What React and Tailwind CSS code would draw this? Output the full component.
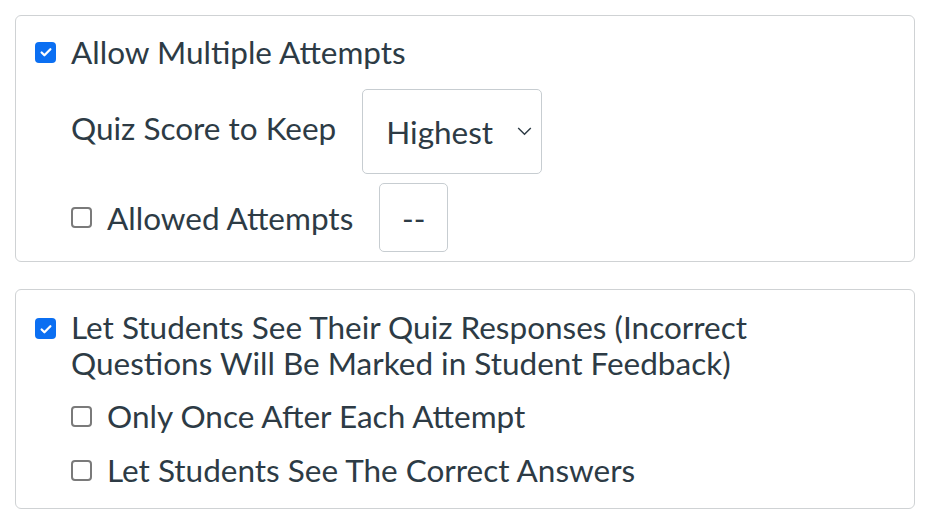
const Check = ({ checked }) =>
  checked ? (
    <span className="flex h-[21px] w-[21px] shrink-0 items-center justify-center rounded-[4px] bg-[#0b6ff2]">
      <svg viewBox="0 0 16 16" className="h-[14px] w-[14px]">
        <path d="M3 8.5l3.2 3.2L13 4.8" fill="none" stroke="white" strokeWidth="2.6" strokeLinecap="round" strokeLinejoin="round" />
      </svg>
    </span>
  ) : (
    <span className="block h-[21px] w-[21px] shrink-0 rounded-[4px] border-2 border-[#7a7a7a] bg-white" />
  );

export default function App() {
  return (
    <div className="min-h-[520px] w-[926px] bg-white pl-[15px] pr-[11px] pt-[15px] font-['Lato','Noto_Sans',sans-serif] text-[31.5px] leading-[36px] text-[#2d3b45]">
      <div className="h-[247px] rounded-[6px] border border-[#cfd2d4] pl-[19px] pt-[18px]">
        <label className="flex items-center gap-[15px]">
          <Check checked />
          <span>Allow Multiple Attempts</span>
        </label>
        <div className="mt-[19px] flex items-center pl-[36px]">
          <span className="-mt-[7px]">Quiz Score to Keep</span>
          <div className="ml-[26px] flex h-[85px] w-[180px] items-center justify-between rounded-[5px] border border-[#c7cdd1] pl-[23px] pr-[9px]">
            <span>Highest</span>
            <svg viewBox="0 0 16 10" className="h-[9px] w-[15px]">
              <path d="M1 1l7 7 7-7" fill="none" stroke="#2d3b45" strokeWidth="1.6" />
            </svg>
          </div>
        </div>
        <div className="mt-[9px] flex items-center pl-[36px]">
          <Check />
          <span className="ml-[15px]">Allowed Attempts</span>
          <div className="ml-[26px] flex h-[69px] w-[69px] items-center justify-center rounded-[5px] border border-[#c7cdd1]">
            --
          </div>
        </div>
      </div>
      <div className="mt-[27px] h-[220px] rounded-[6px] border border-[#cfd2d4] pl-[19px] pt-[27px]">
        <label className="flex items-start gap-[15px]">
          <span className="pt-[1px]">
            <Check checked />
          </span>
          <span className="-mt-[8px]">
            Let Students See Their Quiz Responses (Incorrect
            <br />
            Questions Will Be Marked in Student Feedback)
          </span>
        </label>
        <label className="mt-[17px] flex items-center gap-[15px] pl-[36px]">
          <Check />
          <span>Only Once After Each Attempt</span>
        </label>
        <label className="mt-[18px] flex items-center gap-[15px] pl-[36px]">
          <Check />
          <span>Let Students See The Correct Answers</span>
        </label>
      </div>
    </div>
  );
}
